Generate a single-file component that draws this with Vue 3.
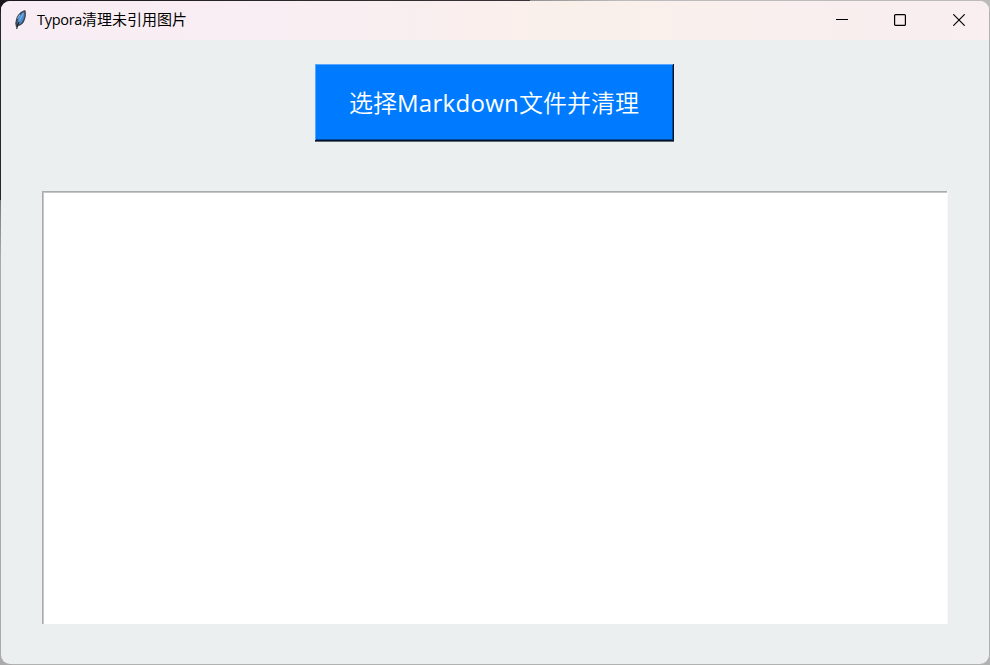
<script setup>
</script>

<template>
  <div class="desktop">
    <main class="window">
      <header class="titlebar">
        <svg class="feather" width="14" height="22" viewBox="0 0 14 22">
          <path d="M2.1 18.5 1.2 14.5 2.2 9.5C3.6 5.5 7 2 11.3 1 12.6 4.5 12 9.5 9.6 13.4 8 15.7 5.8 16.7 4.2 17Z" fill="#41454b" />
          <path d="M3.3 14C3.8 9 6 4.9 10 2.8 11.3 7 9.5 11.7 7 14.2L4.2 15.8Z" fill="#438bd5" />
          <path d="M5.4 11.5 9.4 4.2M3.4 9.7 6 5.6" stroke="#83b4e2" stroke-width="1.1" fill="none" />
          <path d="M2.7 20C3.2 17.5 4 15.2 5 13" stroke="#1b2632" stroke-width="1.2" fill="none" />
        </svg>
        <h1 class="title"><span class="name">Typora</span>清理未引用图片</h1>
        <div class="controls">
          <button class="control" aria-label="最小化">
            <svg width="12" height="12"><path d="M0 5.5H12" stroke="#000" /></svg>
          </button>
          <button class="control" aria-label="最大化">
            <svg width="12" height="12"><rect x=".6" y=".6" width="10.8" height="10.8" rx="1" fill="none" stroke="#000" stroke-width="1.2" /></svg>
          </button>
          <button class="control" aria-label="关闭">
            <svg width="12" height="12"><path d="M.3 .3 11.7 11.7M11.7 .3 .3 11.7" stroke="#000" stroke-width="1.15" /></svg>
          </button>
        </div>
      </header>
      <section class="content">
        <button class="clean"><span class="label">选择<span class="latin">Markdown</span>文件并清理</span></button>
        <div class="output"></div>
      </section>
    </main>
  </div>
</template>

<style>
body { margin: 0; overflow: hidden; }
</style>

<style scoped>
.desktop {
  box-sizing: border-box;
  width: 990px;
  height: 665px;
  padding: 1px;
  background:
    linear-gradient(90deg, #191719, #3a3438 530px, #929092 530px, #bbb 620px) top / 100% 12px no-repeat,
    linear-gradient(#292829 200px, #777 200px, #aaa 260px, #aaa) left / 12px 100% no-repeat,
    #b0b2b2;
  font-family: "Noto Sans", "Noto Sans CJK SC", sans-serif;
}
.window {
  display: flex;
  flex-direction: column;
  height: 663px;
  border-radius: 9px;
  overflow: hidden;
  background: #ebeff0;
}
.titlebar {
  display: flex;
  flex: none;
  height: 39px;
  align-items: center;
  background: linear-gradient(90deg, #f9edf5 0, #f9eef2 330px, #faefed 480px, #faf0ea 570px, #f9efed 720px, #f9eef0 100%);
}
.feather { margin: -2px 0 0 13px; }
.title {
  margin: 0 0 3px 9px;
  font: 400 15px/20px "Noto Sans CJK SC", sans-serif;
  color: #000;
  white-space: nowrap;
}
.name {
  font-family: "Open Sans", sans-serif;
  font-size: 14.5px;
  letter-spacing: -.3px;
}
.controls { display: flex; margin-left: auto; margin-right: 1px; height: 100%; }
.control {
  display: flex;
  align-items: center;
  justify-content: center;
  width: 58.5px;
  height: 38px;
  padding: 0;
  border: 0;
  background: none;
}
.control svg { display: block; }
.content {
  display: flex;
  flex: 1;
  flex-direction: column;
  padding: 24px 41px 40px;
}
.clean {
  box-sizing: border-box;
  display: flex;
  align-items: center;
  justify-content: center;
  align-self: center;
  width: 359px;
  height: 78px;
  margin-right: 2px;
  padding: 0 0 2px;
  border: 0;
  background: #007bff;
  box-shadow: inset 0 -1px #5b666e, inset -1px -2px #00142c, inset 1px 1px #58a7ff, inset -2px -3px #00499c;
  color: #fff;
}
.label {
  font: 350 24px/36px "Noto Sans CJK SC", sans-serif;
  white-space: nowrap;
}
.latin {
  font: 400 24px/36px "Open Sans", sans-serif;
  letter-spacing: .3px;
}
.output {
  flex: 1;
  margin: 49px 1px 0 0;
  background: #fff;
  box-shadow: inset 1px 1px #a9acac, inset 2px 2px #c5c7c7, 1px 0 #f8fafa;
}
</style>
